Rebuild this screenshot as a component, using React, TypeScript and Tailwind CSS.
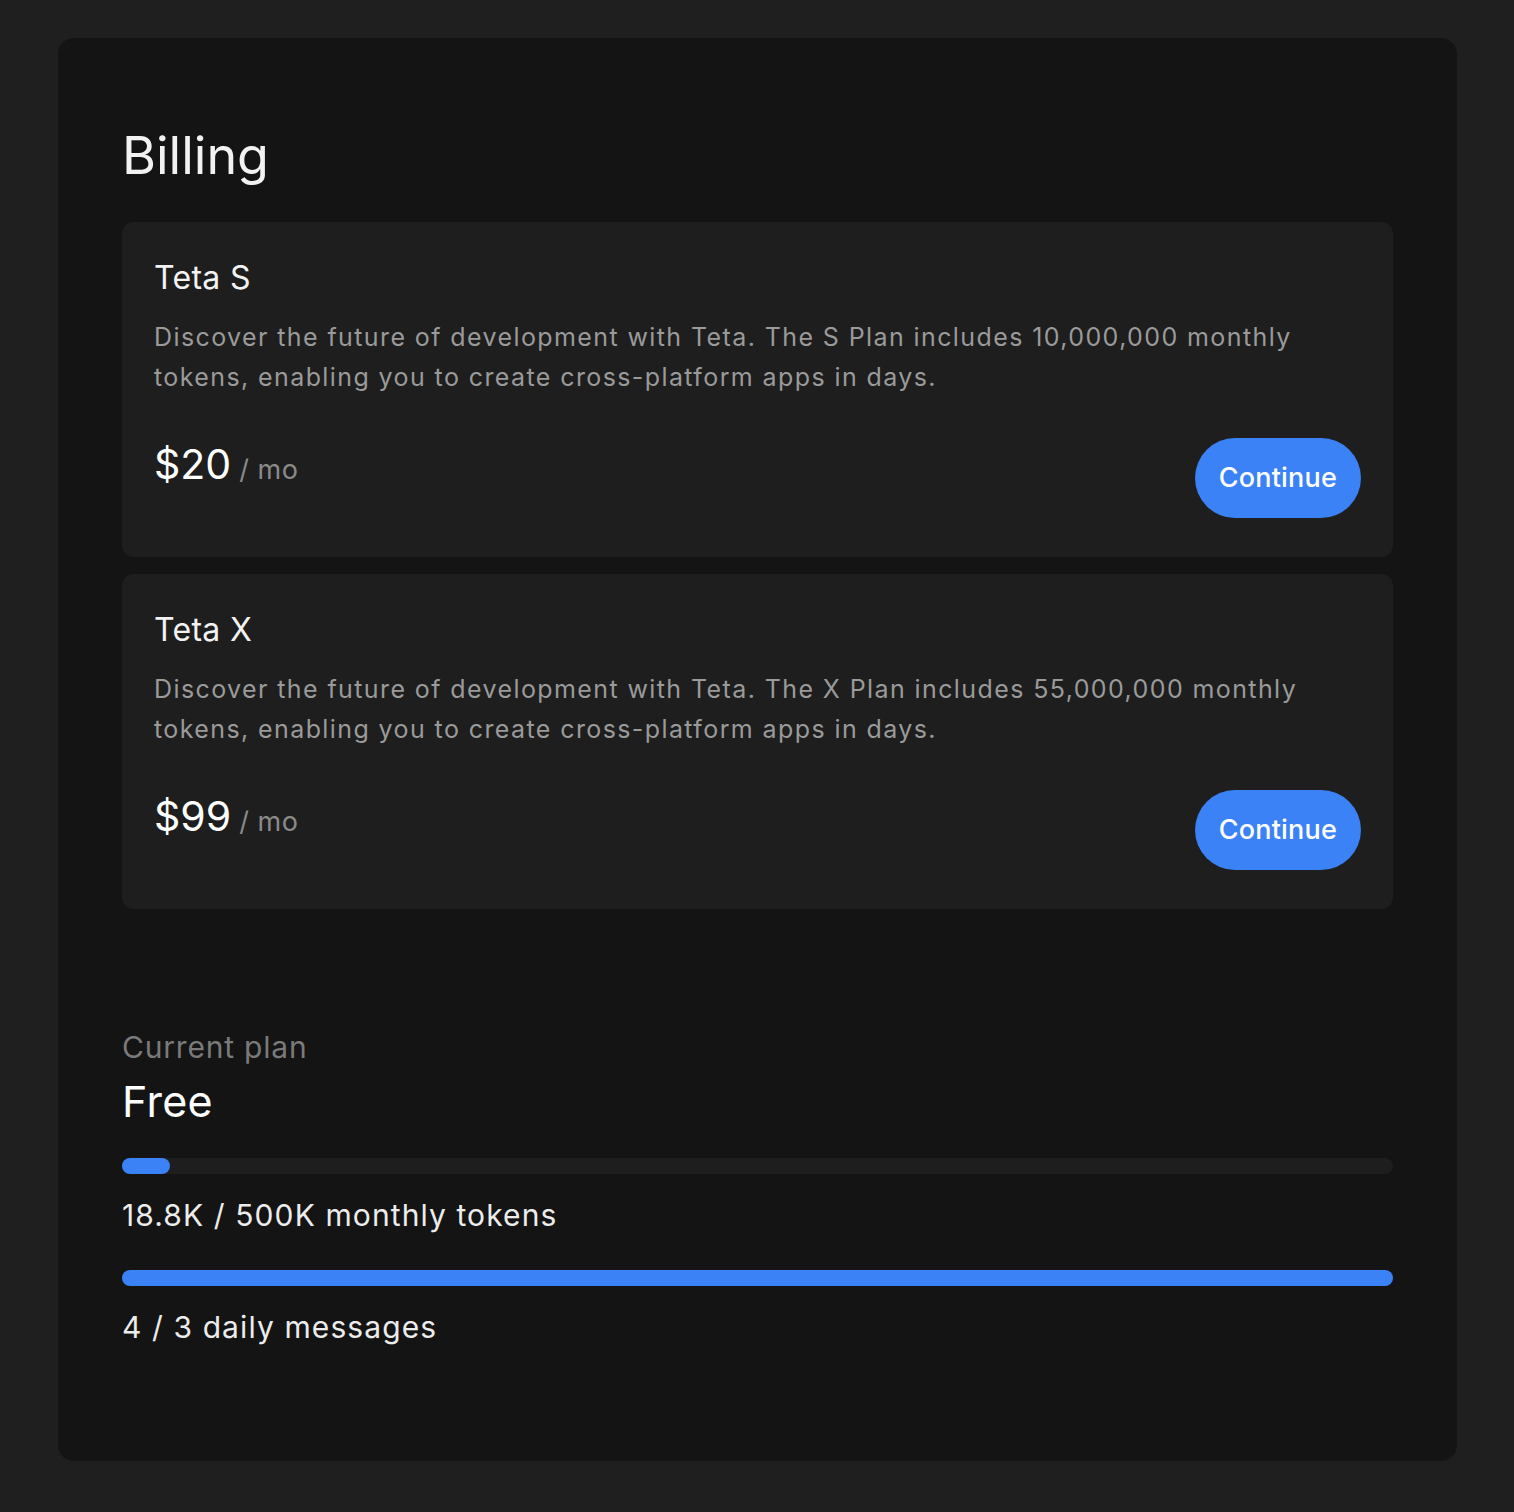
import React from "react"

const font = { fontFamily: "Inter, 'Noto Sans', sans-serif" }

const plans = [
  { name: "Teta S", tokens: "10,000,000", price: "$20" },
  { name: "Teta X", tokens: "55,000,000", price: "$99" },
]

function PlanCard({ name, tokens, price }: { name: string; tokens: string; price: string }) {
  const letter = name.split(" ")[1]
  const text = `Discover the future of development with Teta. The ${letter} Plan includes ${tokens} monthly tokens, enabling you to create cross-platform apps in days.`
  return (
    <div className="rounded-xl bg-[#1e1e1e] px-8 pt-[37px] pb-[39px]">
      <h2 className="text-[32px] leading-[38px] tracking-[0.3px] text-[#f2f2f2]">{name}</h2>
      <p className="mt-[20px] text-[25px] leading-[40px] tracking-[1.4px] text-[#9a9a9a]">{text}</p>
      <div className="mt-[41px] flex items-start justify-between">
        <div className="flex items-baseline gap-2 pt-[1px]">
          <span className="text-[41px] leading-[50px] text-white">{price}</span>
          <span className="text-[27px] tracking-[0.5px] text-[#8a8a8a]">/ mo</span>
        </div>
        <button className="h-20 rounded-full bg-[#3b82f6] px-6 text-[27px] font-medium tracking-[0.2px] text-white">
          Continue
        </button>
      </div>
    </div>
  )
}

function Bar({ pct }: { pct: number }) {
  return (
    <div className="h-4 w-full rounded-full bg-[#1e1e1e]">
      <div className="h-4 rounded-full bg-[#3b82f6]" style={{ width: `${pct}%` }} />
    </div>
  )
}

export default function App() {
  return (
    <div className="min-h-[1512px] bg-[#1f1f1f] pt-[38px] pr-[57px] pb-[51px] pl-[58px]" style={font}>
      <div className="rounded-2xl bg-[#141414] px-16 pt-[80px] pb-[114px]">
        <h1 className="text-[52px] leading-[76px] text-[#f2f2f2]">Billing</h1>
        <div className="mt-[28px] flex flex-col gap-[17px]">
          {plans.map((p) => (
            <PlanCard key={p.name} {...p} />
          ))}
        </div>
        <div className="mt-[118px]">
          <div className="text-[30px] leading-[40px] tracking-[0.8px] text-[#7a7a7a]">Current plan</div>
          <div className="mt-[6px] text-[43px] leading-[56px] tracking-[0.3px] text-white">Free</div>
          <div className="mt-[29px]">
            <Bar pct={3.8} />
          </div>
          <div className="mt-[21px] text-[30px] leading-[40px] tracking-[1.1px] text-[#ececec]">
            18.8K / 500K monthly tokens
          </div>
          <div className="mt-[35px]">
            <Bar pct={100} />
          </div>
          <div className="mt-[21px] text-[30px] leading-[40px] tracking-[1.1px] text-[#ececec]">4 / 3 daily messages</div>
        </div>
      </div>
    </div>
  )
}
